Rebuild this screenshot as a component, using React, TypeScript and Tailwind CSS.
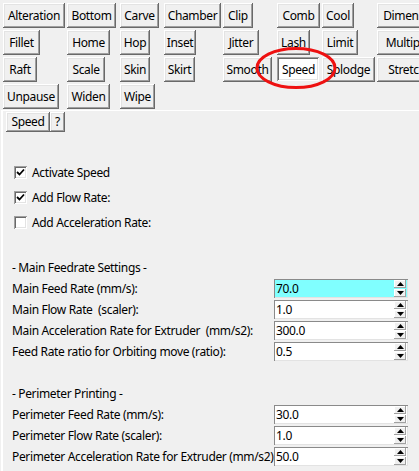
import React from "react";

const raised =
  "shadow-[inset_-1px_-1px_#696969,inset_1px_1px_#ffffff,inset_-2px_-2px_#a0a0a0,inset_2px_2px_#e3e3e3]";
const sunken =
  "shadow-[inset_1px_1px_#a0a0a0,inset_-1px_-1px_#ffffff,inset_2px_2px_#696969,inset_-2px_-2px_#e3e3e3]";

type Tool = { name: string; w: string; pressed?: boolean };

const tools: Tool[][] = [
  [
    { name: "Alteration", w: "w-[62px]" },
    { name: "Bottom", w: "w-[49px]" },
    { name: "Carve", w: "w-[39px]" },
    { name: "Chamber", w: "w-[57px]" },
    { name: "Clip", w: "w-[30px]" },
    { name: "Comb", w: "w-[43px]" },
    { name: "Cool", w: "w-[32px]" },
    { name: "Dimension", w: "w-[70px]" },
  ],
  [
    { name: "Fillet", w: "w-[37px]" },
    { name: "Home", w: "w-[43px]" },
    { name: "Hop", w: "w-[30px]" },
    { name: "Inset", w: "w-[32px]" },
    { name: "Jitter", w: "w-[36px]" },
    { name: "Lash", w: "w-[33px]" },
    { name: "Limit", w: "w-[36px]" },
    { name: "Multiply", w: "w-[60px]" },
  ],
  [
    { name: "Raft", w: "w-[34px]" },
    { name: "Scale", w: "w-[38px]" },
    { name: "Skin", w: "w-[30px]" },
    { name: "Skirt", w: "w-[31px]" },
    { name: "Smooth", w: "w-[49px]" },
    { name: "Speed", w: "w-[42px]", pressed: true },
    { name: "Splodge", w: "w-[53px]" },
    { name: "Stretch", w: "w-[60px]" },
  ],
  [
    { name: "Unpause", w: "w-[56px]" },
    { name: "Widen", w: "w-[43px]" },
    { name: "Wipe", w: "w-[35px]" },
  ],
];

function ToolButton({ t }: { t: Tool }) {
  if (t.pressed) {
    return (
      <div
        className={`${t.w} h-[24px] bg-white ${sunken} flex items-center justify-center pt-[2px] pl-[1px] whitespace-nowrap`}
      >
        {t.name}
      </div>
    );
  }
  return (
    <div
      className={`${t.w} h-[25px] bg-[#f0f0f0] ${raised} flex items-center justify-center whitespace-nowrap overflow-hidden`}
    >
      {t.name}
    </div>
  );
}

function Check({ checked, label }: { checked: boolean; label: string }) {
  return (
    <div className="h-[25px] flex items-center pl-[11px]">
      <div className="w-[13px] h-[13px] bg-white shadow-[inset_1px_1px_#a0a0a0,inset_-1px_-1px_#ffffff,inset_2px_2px_#696969,inset_-2px_-2px_#e3e3e3] flex items-center justify-center">
        {checked && (
          <svg width="9" height="9" viewBox="0 0 9 9">
            <path d="M1 4 L3.5 6.5 L8 1.5" stroke="#000" strokeWidth="1.8" fill="none" />
          </svg>
        )}
      </div>
      <span className="ml-[5px]">{label}</span>
    </div>
  );
}

function Arrow({ up }: { up: boolean }) {
  return (
    <div className="h-[8px] w-[12px] bg-[#f0f0f0] shadow-[inset_-1px_-1px_#a0a0a0,inset_1px_1px_#ffffff] flex items-center justify-center">
      <svg width="7" height="4" viewBox="0 0 7 4">
        {up ? <path d="M0 4 L3.5 0 L7 4 Z" fill="#000" /> : <path d="M0 0 L7 0 L3.5 4 Z" fill="#000" />}
      </svg>
    </div>
  );
}

function Field({ label, value, hl }: { label: string; value: string; hl?: boolean }) {
  return (
    <div className="h-[21px] flex items-center pl-[9px]">
      <span className="w-[262px] whitespace-pre">{label}</span>
      <div
        className={`w-[134px] h-[19px] ${hl ? "bg-[#80ffff]" : "bg-white"} shadow-[inset_1px_1px_#8a8a8a,inset_-1px_-1px_#e3e3e3] flex items-center justify-between pl-[2px] pr-[2px]`}
      >
        <span>{value}</span>
        <div className="flex flex-col gap-[1px]">
          <Arrow up />
          <Arrow up={false} />
        </div>
      </div>
    </div>
  );
}

export default function App() {
  return (
    <div
      className="relative w-[419px] h-[471px] overflow-hidden bg-[#f0f0f0] text-black text-[12px] leading-none tracking-[-0.35px]"
      style={{ fontFamily: '"Noto Sans", "Open Sans", sans-serif' }}
    >
      {/* tool buttons */}
      <div className="pl-[3px] pt-[3px] grid grid-cols-[64px_53px_44px_59px_54px_45px_55px_80px] auto-rows-[25px] gap-y-[2px]">
        {tools.map((row, i) =>
          row.map((t) => (
            <div key={`${i}-${t.name}`} className="flex items-start">
              <ToolButton t={t} />
            </div>
          ))
        )}
      </div>

      {/* settings panel */}
      <div className="mt-[1px] border-t border-t-white border-l-[2px] border-l-white ml-[1px] h-full">
        <div className="flex pt-[1px] pl-[3px]">
          <div className={`w-[44px] h-[20px] ${raised} flex items-center justify-center`}>Speed</div>
          <div className={`w-[15px] h-[20px] ${raised} flex items-center justify-center`}>?</div>
        </div>

        <div className="mt-[28px]">
          <Check checked label="Activate Speed" />
          <Check checked label="Add Flow Rate:" />
          <Check checked={false} label="Add Acceleration Rate:" />
        </div>

        <div className="mt-[22px]">
          <div className="h-[21px] flex items-center pl-[9px]">- Main Feedrate Settings -</div>
          <Field label="Main Feed Rate (mm/s):" value="70.0" hl />
          <Field label="Main Flow Rate  (scaler):" value="1.0" />
          <Field label="Main Acceleration Rate for Extruder  (mm/s2):" value="300.0" />
          <Field label="Feed Rate ratio for Orbiting move (ratio):" value="0.5" />
          <div className="h-[21px]" />
          <div className="h-[21px] flex items-center pl-[9px]">- Perimeter Printing -</div>
          <Field label="Perimeter Feed Rate (mm/s):" value="30.0" />
          <Field label="Perimeter Flow Rate (scaler):" value="1.0" />
          <Field label="Perimeter Acceleration Rate for Extruder (mm/s2):" value="50.0" />
        </div>
      </div>

      {/* red annotation */}
      <svg className="absolute left-[254px] top-[46px]" width="86" height="46" viewBox="0 0 86 46">
        <ellipse cx="42" cy="22" rx="39" ry="19.5" fill="none" stroke="#ee1111" strokeWidth="3" />
      </svg>
    </div>
  );
}
